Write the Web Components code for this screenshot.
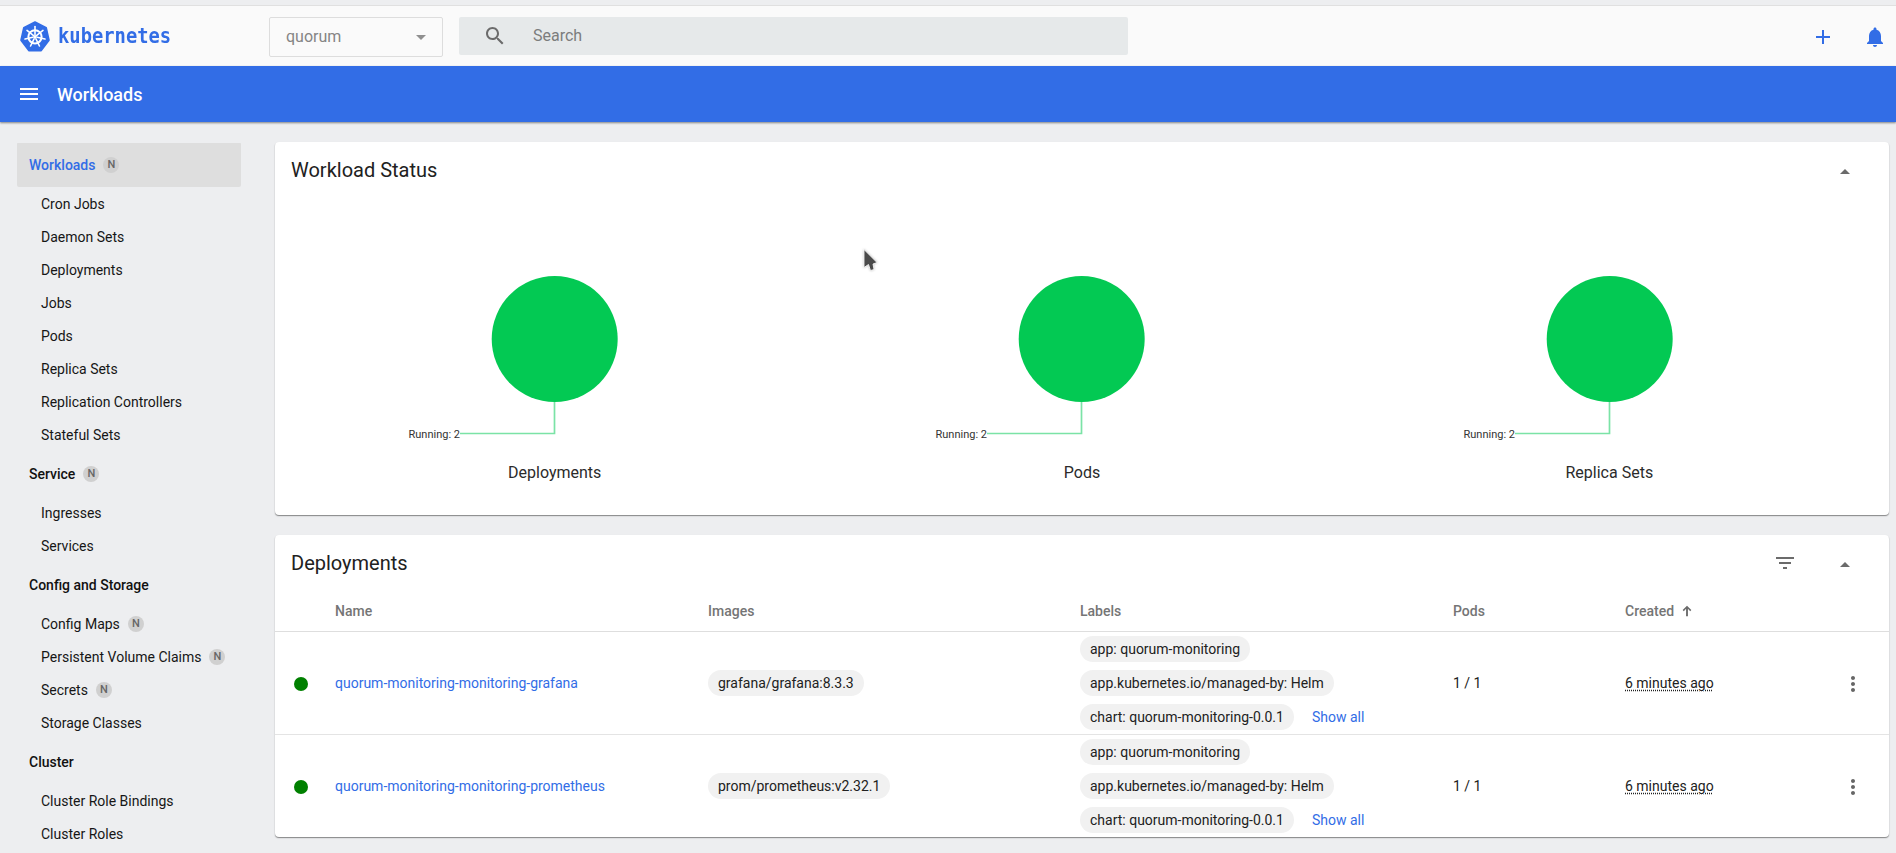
<!DOCTYPE html>
<html lang="en">
<head>
<meta charset="utf-8">
<title>Kubernetes Dashboard</title>
<style>
html,body{margin:0;padding:0;height:100%;overflow:hidden;background:#edeef0;font-family:Roboto,"Liberation Sans",sans-serif;}
</style>
</head>
<body>
<k-app></k-app>
<script>
const ICONS={
 menu:'M3 18h18v-2H3v2zm0-5h18v-2H3v2zm0-7v2h18V6H3z',
 search:'M15.5 14h-.79l-.28-.27C15.41 12.59 16 11.11 16 9.5 16 5.91 13.09 3 9.5 3S3 5.91 3 9.5 5.91 16 9.5 16c1.61 0 3.09-.59 4.23-1.57l.27.28v.79l5 4.99L20.49 19l-4.99-5zm-6 0C7.01 14 5 11.99 5 9.5S7.01 5 9.5 5 14 7.01 14 9.5 11.99 14 9.5 14z',
 add:'M19 13h-6v6h-2v-6H5v-2h6V5h2v6h6v2z',
 bell:'M12 22c1.1 0 2-.9 2-2h-4c0 1.1.89 2 2 2zm6-6v-5c0-3.07-1.64-5.64-4.5-6.32V4c0-.83-.67-1.5-1.5-1.5s-1.5.67-1.5 1.5v.68C7.63 5.36 6 7.92 6 11v5l-2 2v1h16v-1l-2-2z',
 filter:'M10 18h4v-2h-4v2zM3 6v2h18V6H3zm3 7h12v-2H6v2z',
 up:'M7 15l5-5 5 5z',
 down:'M7 10l5 5 5-5z',
 more:'M12 8c1.1 0 2-.9 2-2s-.9-2-2-2-2 .9-2 2 .9 2 2 2zm0 2c-1.1 0-2 .9-2 2s.9 2 2 2 2-.9 2-2-.9-2-2-2zm0 6c-1.1 0-2 .9-2 2s.9 2 2 2 2-.9 2-2-.9-2-2-2z',
 arrow:'M12 4L5.5 10.5 7.2 12.2 10.6 8.8V20h2.8V8.8l3.4 3.4 1.7-1.7z'
};
function def(name,render){
 customElements.define(name,class extends HTMLElement{
  connectedCallback(){
   if(this.shadowRoot)return;
   this.attachShadow({mode:'open'}).innerHTML=render(this);
  }
 });
}
def('k-icon',el=>{
 const s=el.getAttribute('size')||24;
 return `<style>:host{display:inline-flex;width:${s}px;height:${s}px;color:inherit;flex:none}svg{display:block;fill:currentColor}</style>
 <svg width="${s}" height="${s}" viewBox="0 0 24 24"><path d="${ICONS[el.getAttribute('name')]}"/></svg>`;
});
def('k-logo',()=>{
 let spokes='';
 for(let i=0;i<7;i++){
  const a=(-90+i*360/7)*Math.PI/180;
  spokes+=`<line x1="${15+Math.cos(a)*2.2}" y1="${15.8+Math.sin(a)*2.2}" x2="${15+Math.cos(a)*10.2}" y2="${15.8+Math.sin(a)*10.2}"/>`;
 }
 return `<style>:host{display:flex;align-items:center;gap:8px;color:#326de6}
 svg{display:block;flex:none}
 span{font:700 21px/1 "DejaVu Sans Mono",monospace;transform:scaleX(.895);transform-origin:0 50%;position:relative;top:0}</style>
 <svg width="30" height="31" viewBox="0 0 30 31"><polygon points="15,1 26.2,6.6 29,19.2 21.2,29.6 8.8,29.6 1,19.2 3.8,6.6" fill="#326de6" stroke="#326de6" stroke-width="1.6" stroke-linejoin="round"/>
 <g stroke="#fff" fill="none"><circle cx="15" cy="15.8" r="6.6" stroke-width="2"/><g stroke-width="1.6" stroke-linecap="round">${spokes}</g></g><circle cx="15" cy="15.8" r="1.8" fill="#fff"/></svg>
 <span>kubernetes</span>`;
});
def('k-select',el=>`<style>:host{display:flex;box-sizing:border-box;width:174px;height:40px;border:1px solid #ddd;border-radius:2px;align-items:center;justify-content:space-between;padding:0 9px 0 16px;color:#858585;font-size:16px}
 k-icon{color:#8f8f8f}</style><span><slot></slot></span><k-icon name="down"></k-icon>`);
def('k-search',()=>`<style>:host{display:flex;box-sizing:border-box;width:669px;height:38px;background:#e6e9ea;border-radius:2px;align-items:center;padding-left:24px;color:#7c7d7d;font-size:16px}
 k-icon{color:#6b6b6b;margin-right:26px}</style><k-icon name="search"></k-icon><span><slot></slot></span>`);
def('k-toolbar',()=>`<style>:host{display:flex;box-sizing:border-box;height:61px;margin-top:5px;border-top:1px solid #e0e0e0;background:#fafafa;align-items:center;padding-left:20px;position:relative;flex:none}
 k-logo{width:249px;flex:none}
 k-select{margin-right:16px;margin-top:1px}
 k-search{margin-top:-1px}
 .right{margin-left:auto;display:flex;align-items:center;color:#326de6;padding-right:9px;gap:28px;margin-top:1px}</style>
 <k-logo></k-logo><k-select>quorum</k-select><k-search>Search</k-search>
 <div class="right"><k-icon name="add"></k-icon><k-icon name="bell"></k-icon></div>`);
def('k-actionbar',()=>`<style>:host{display:flex;box-sizing:border-box;height:56px;background:#326de6;color:#fff;align-items:center;padding-left:17px;box-shadow:0 1px 2px rgba(0,0,0,.45);position:relative;z-index:2;flex:none}
 span{font-size:18px;font-weight:500;margin-left:16px}</style><k-icon name="menu"></k-icon><span><slot></slot></span>`);
def('k-badge',()=>`<style>:host{display:inline-flex;width:16px;height:16px;border-radius:50%;background:#d0d0d0;color:#666;font-size:11px;font-weight:500;align-items:center;justify-content:center;margin-left:8px;flex:none}</style>N`);
def('k-nav-header',el=>{
 const a=el.hasAttribute('active');
 return `<style>:host{display:flex;box-sizing:border-box;height:45px;align-items:center;padding:0 12px;font-size:14px;font-weight:500;white-space:nowrap;color:${a?'#326de6':'#111'};${a?'background:linear-gradient(#dedede,#dedede) 0 1px/100% 44px no-repeat;':''}border-radius:2px}</style>
 <slot></slot>${el.hasAttribute('badge')?'<k-badge></k-badge>':''}`;
});
def('k-nav-item',el=>`<style>:host{display:flex;box-sizing:border-box;height:33px;align-items:center;padding:0 24px;font-size:14px;color:#161616;white-space:nowrap}</style><slot></slot>${el.hasAttribute('badge')?'<k-badge></k-badge>':''}`);
def('k-sidebar',()=>`<style>:host{display:block;box-sizing:border-box;width:275px;flex:none;padding:20px 34px 0 17px;overflow:hidden}</style><slot></slot>`);
def('k-card',el=>`<style>:host{display:block;background:#fff;border-radius:4px;box-shadow:0 1px 1px rgba(0,0,0,.38),0 1px 2px rgba(0,0,0,.1)}
 header{display:flex;height:56px;align-items:center;padding:0 32px 0 16px;color:#212121}
 h2{margin:0;font-size:20px;font-weight:400;flex:1}
 .act{display:flex;align-items:center;gap:36px;color:#6b6b6b}
 .act k-icon[name=up]{position:relative;top:1px}</style>
 <header><h2>${el.getAttribute('heading')}</h2><div class="act"><slot name="actions"></slot><k-icon name="up"></k-icon></div></header><slot></slot>`);
def('k-donut',el=>`<style>:host{display:block;flex:1 1 0;min-width:0;text-align:center}
 svg{display:block;margin:0 auto}
 text{font:11px Roboto,sans-serif;fill:#333}
 div{font-size:16px;color:#2b2b2b;line-height:20px;margin-top:10px}</style>
 <svg width="528" height="255" viewBox="0 0 528 255"><circle cx="263.7" cy="141" r="63" fill="#03c953"/>
 <polyline points="263.5,204 263.5,235.5 169,235.5" fill="none" stroke="#7be3a6" stroke-width="1.7"/>
 <text x="169" y="239.5" text-anchor="end">Running: 2</text></svg>
 <div>${el.getAttribute('label')}</div>`);
def('k-chip',()=>`<style>:host{display:inline-flex;height:26px;align-items:center;padding:0 10px;border-radius:13px;background:#f1f1f1;font-size:14px;color:#212121;white-space:nowrap;box-sizing:border-box}</style><slot></slot>`);
const GRID='grid-template-columns:60px 373px 372px 373px 172px 204px 48px;';
def('k-table-head',()=>`<style>:host{display:grid;${GRID}height:41px;box-sizing:border-box;align-items:center;border-bottom:1px solid #dedede;font-size:14px;font-weight:500;color:#757575}
 .c{display:flex;align-items:center;gap:5px}
 k-icon{color:#6a6a6a}</style>
 <span></span><span>Name</span><span>Images</span><span>Labels</span><span>Pods</span><span class="c">Created<k-icon name="arrow" size="16"></k-icon></span><span></span>`);
def('k-row',el=>`<style>:host{display:grid;${GRID}box-sizing:border-box;align-items:center;font-size:14px;color:#212121;padding:4px 0;${el.hasAttribute('last')?'height:102px;':'height:103px;border-bottom:1px solid #e4e4e4;'}}
 .dot{width:14px;height:14px;border-radius:50%;background:#008000;margin-left:19px;position:relative;top:1px}
 a{color:#326de6;text-decoration:none}
 .labels{display:flex;flex-direction:column;align-items:flex-start;gap:8px}
 .l{display:flex;align-items:center}
 .l a{margin-left:18px}
 abbr{text-decoration:underline dotted;text-underline-offset:2px}
 .m{display:flex;justify-content:center;color:#666;position:relative;top:1px}
 .img{justify-self:start}</style>
 <span class="dot"></span><a href="#">${el.getAttribute('name')}</a><k-chip class="img">${el.getAttribute('image')}</k-chip>
 <div class="labels"><k-chip>app: quorum-monitoring</k-chip><k-chip>app.kubernetes.io/managed-by: Helm</k-chip>
 <div class="l"><k-chip>chart: quorum-monitoring-0.0.1</k-chip><a href="#">Show all</a></div></div>
 <span>1 / 1</span><abbr>6 minutes ago</abbr><span class="m"><k-icon name="more"></k-icon></span>`);
def('k-cursor',()=>`<style>:host{position:absolute;left:863px;top:249px;width:15px;height:23px;z-index:5}svg{display:block;filter:drop-shadow(0 0 1px rgba(0,0,0,.25))}</style>
 <svg width="15" height="23" viewBox="0 0 15 23"><path d="M1 .5L14 13.5 10 15 11 20.5 7.5 21.5 5.5 15.5 1 18.5z" fill="#4a4a4a" stroke="#fff" stroke-width=".8"/></svg>`);
def('k-app',()=>`<style>:host{display:flex;flex-direction:column;height:853px;overflow:hidden;position:relative;background:#edeef0;color:#212121}
 main{display:flex;flex:1;min-height:0}
 .content{flex:1;min-width:0;padding:20px 7px 0 0;display:flex;flex-direction:column;gap:20px}
 .charts{display:flex;padding:0 16px;height:317px}</style>
 <k-toolbar></k-toolbar>
 <k-actionbar>Workloads</k-actionbar>
 <main>
 <k-sidebar>
  <k-nav-header active badge>Workloads</k-nav-header>
  <k-nav-item>Cron Jobs</k-nav-item><k-nav-item>Daemon Sets</k-nav-item><k-nav-item>Deployments</k-nav-item><k-nav-item>Jobs</k-nav-item><k-nav-item>Pods</k-nav-item><k-nav-item>Replica Sets</k-nav-item><k-nav-item>Replication Controllers</k-nav-item><k-nav-item>Stateful Sets</k-nav-item>
  <k-nav-header badge>Service</k-nav-header>
  <k-nav-item>Ingresses</k-nav-item><k-nav-item>Services</k-nav-item>
  <k-nav-header>Config and Storage</k-nav-header>
  <k-nav-item badge>Config Maps</k-nav-item><k-nav-item badge>Persistent Volume Claims</k-nav-item><k-nav-item badge>Secrets</k-nav-item><k-nav-item>Storage Classes</k-nav-item>
  <k-nav-header>Cluster</k-nav-header>
  <k-nav-item>Cluster Role Bindings</k-nav-item><k-nav-item>Cluster Roles</k-nav-item>
 </k-sidebar>
 <div class="content">
  <k-card heading="Workload Status"><div class="charts"><k-donut label="Deployments"></k-donut><k-donut label="Pods"></k-donut><k-donut label="Replica Sets"></k-donut></div></k-card>
  <k-card heading="Deployments"><k-icon slot="actions" name="filter"></k-icon>
   <k-table-head></k-table-head>
   <k-row name="quorum-monitoring-monitoring-grafana" image="grafana/grafana:8.3.3"></k-row>
   <k-row last name="quorum-monitoring-monitoring-prometheus" image="prom/prometheus:v2.32.1"></k-row>
  </k-card>
 </div>
 </main>
 <k-cursor></k-cursor>`);
</script>
</body>
</html>
